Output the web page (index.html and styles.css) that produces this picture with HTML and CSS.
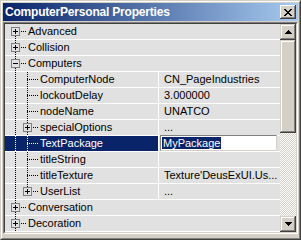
FILE: index.html
```html
<!DOCTYPE html>
<html>
<head>
<meta charset="utf-8">
<link rel="stylesheet" href="styles.css">
</head>
<body>
<div class="window">
  <div class="frame">
    <div class="title">
      <span class="caption">ComputerPersonal Properties</span>
      <span class="close"><svg width="8" height="7" viewBox="0 0 8 7"><path d="M0 0h2v1h1v1h2V1h1V0h2v1H7v1H6v1H5v1h1v1h1v1h1v1H6V6H5V5H3v1H2v1H0V6h1V5h1V4h1V3H2V2H1V1H0z" fill="#000"/></svg></span>
    </div>
    <div class="list">
      <div class="well">
        <div class="rows">
          <div class="row cat"><div class="name"><span class="tc top"><span class="bx plus"></span></span><span class="stub"></span><span class="nm">Advanced</span></div></div>
          <div class="row cat"><div class="name"><span class="tc tee"><span class="bx plus"></span></span><span class="stub"></span><span class="nm">Collision</span></div></div>
          <div class="row cat"><div class="name"><span class="tc tee"><span class="bx minus"></span></span><span class="stub"></span><span class="nm">Computers</span></div></div>
          <div class="row"><div class="name"><span class="tc pipe"></span><span class="tc tee"></span><span class="stub"></span><span class="nm">ComputerNode</span></div><div class="val">CN_PageIndustries</div></div>
          <div class="row"><div class="name"><span class="tc pipe"></span><span class="tc tee"></span><span class="stub"></span><span class="nm">lockoutDelay</span></div><div class="val">3.000000</div></div>
          <div class="row"><div class="name"><span class="tc pipe"></span><span class="tc tee"></span><span class="stub"></span><span class="nm">nodeName</span></div><div class="val">UNATCO</div></div>
          <div class="row"><div class="name"><span class="tc pipe"></span><span class="tc tee"><span class="bx plus"></span></span><span class="stub"></span><span class="nm">specialOptions</span></div><div class="val">...</div></div>
          <div class="row sel"><div class="name"><span class="tc pipe"></span><span class="tc tee"></span><span class="stub"></span><span class="nm">TextPackage</span></div><div class="val editing"><div class="edit"><span class="hl">MyPackage</span></div></div></div>
          <div class="row"><div class="name"><span class="tc pipe"></span><span class="tc tee"></span><span class="stub"></span><span class="nm">titleString</span></div><div class="val"></div></div>
          <div class="row"><div class="name"><span class="tc pipe"></span><span class="tc tee"></span><span class="stub"></span><span class="nm">titleTexture</span></div><div class="val">Texture'DeusExUI.Us...</div></div>
          <div class="row"><div class="name"><span class="tc pipe"></span><span class="tc end"><span class="bx plus"></span></span><span class="stub"></span><span class="nm">UserList</span></div><div class="val">...</div></div>
          <div class="row cat"><div class="name"><span class="tc tee"><span class="bx plus"></span></span><span class="stub"></span><span class="nm">Conversation</span></div></div>
          <div class="row cat"><div class="name"><span class="tc tee"><span class="bx plus"></span></span><span class="stub"></span><span class="nm">Decoration</span></div></div>
        </div>
        <div class="sb">
          <div class="btn"><svg width="7" height="4" viewBox="0 0 7 4"><path d="M3 0h1v1h1v1h1v1h1v1H0V3h1V2h1V1h1z" fill="#000"/></svg></div>
          <div class="thumb"></div>
          <div class="track"></div>
          <div class="btn"><svg width="7" height="4" viewBox="0 0 7 4"><path d="M0 0h7v1H6v1H5v1H4v1H3V3H2V2H1V1H0z" fill="#000"/></svg></div>
        </div>
      </div>
    </div>
  </div>
</div>
</body>
</html>
```

FILE: styles.css
```css
* { box-sizing: border-box; }
html, body { margin: 0; padding: 0; }
body {
  width: 301px; height: 240px; overflow: hidden;
  font-family: "Liberation Sans", Arial, sans-serif;
  font-size: 11px; color: #000; background: #d4d0c8;
}
.window {
  width: 301px; height: 240px;
  border: 1px solid; border-color: #d4d0c8 #404040 #404040 #d4d0c8;
  background: #d4d0c8;
}
.frame {
  height: 100%;
  border: 1px solid; border-color: #fff #808080 #808080 #fff;
  padding: 1px;
  display: flex; flex-direction: column;
}
.title {
  flex: none; height: 18px;
  display: flex; align-items: center; justify-content: space-between;
  padding: 0 2px;
  background: linear-gradient(to right, #0a246a, #a6caf0);
  color: #fff; font-weight: bold; font-size: 12px; letter-spacing: -0.2px;
  line-height: 18px;
}
.caption { white-space: nowrap; }
.close {
  width: 16px; height: 14px; background: #d4d0c8;
  display: flex; align-items: center; justify-content: center;
  box-shadow: inset -1px -1px #404040, inset 1px 1px #fff, inset -2px -2px #808080;
}
.close svg, .btn svg { display: block; }
.list {
  flex: none; margin-top: 1px; height: 212px;
  border: 1px solid; border-color: #808080 #fff #fff #808080;
}
.well {
  height: 100%; display: flex;
  border: 1px solid; border-color: #404040 #d4d0c8 #d4d0c8 #404040;
}
.rows { flex: 1; background: #e1e1e1; --d: #000; }
.row {
  display: flex; height: 16px;
  box-shadow: inset 0 -1px #fff;
}
.name {
  width: 153px; flex: none; display: flex; padding-left: 4px;
  white-space: nowrap;
}
.row.cat .name { width: auto; flex: 1; }
.nm { line-height: 15px; margin-left: 2px; }
.val {
  flex: 1; border-left: 1px solid #fff; padding-left: 5px;
  line-height: 15px; white-space: nowrap; overflow: hidden;
}
.tc { width: 12px; height: 16px; flex: none; padding: 3px 0 0 2px; }
.tc.pipe {
  background: repeating-linear-gradient(to bottom, var(--d) 0 1px, transparent 1px 2px) 6px 0 / 1px 16px no-repeat;
}
.tc.tee {
  background:
    repeating-linear-gradient(to bottom, var(--d) 0 1px, transparent 1px 2px) 6px 0 / 1px 16px no-repeat,
    repeating-linear-gradient(to right, var(--d) 0 1px, transparent 1px 2px) 6px 7px / 6px 1px no-repeat;
}
.tc.top {
  background:
    repeating-linear-gradient(to bottom, var(--d) 0 1px, transparent 1px 2px) 6px 8px / 1px 8px no-repeat,
    repeating-linear-gradient(to right, var(--d) 0 1px, transparent 1px 2px) 6px 7px / 6px 1px no-repeat;
}
.tc.end {
  background:
    repeating-linear-gradient(to bottom, var(--d) 0 1px, transparent 1px 2px) 6px 0 / 1px 8px no-repeat,
    repeating-linear-gradient(to right, var(--d) 0 1px, transparent 1px 2px) 6px 7px / 6px 1px no-repeat;
}
.stub {
  width: 5px; height: 16px; flex: none;
  background: repeating-linear-gradient(to right, var(--d) 0 1px, transparent 1px 2px) 0 7px / 5px 1px no-repeat;
}
.bx {
  display: block; width: 9px; height: 9px;
  border: 1px solid #808080; background-color: #e1e1e1;
}
.bx.plus {
  background:
    linear-gradient(#000, #000) 1px 3px / 5px 1px no-repeat,
    linear-gradient(#000, #000) 3px 1px / 1px 5px no-repeat,
    #e1e1e1;
}
.bx.minus {
  background: linear-gradient(#000, #000) 1px 3px / 5px 1px no-repeat, #e1e1e1;
}
.row.sel { --d: #fff; }
.row.sel .name {
  background: linear-gradient(#0a246a, #0a246a) 0 0 / 100% 15px no-repeat;
  color: #fff;
}
.val.editing { padding-left: 1px; overflow: visible; }
.edit {
  width: 117px; height: 16px; margin-top: -1px;
  background: #fff;
  border: 1px solid; border-color: #808080 #d4d0c8 #d4d0c8 #808080;
  padding: 1px 0 0 1px; line-height: 13px;
}
.hl { background: #0a246a; color: #fff; padding: 0 1px; }
.sb { width: 16px; flex: none; display: flex; flex-direction: column; }
.btn, .thumb {
  background: #d4d0c8;
  box-shadow: inset -1px -1px #404040, inset 1px 1px #d4d0c8, inset -2px -2px #808080, inset 2px 2px #fff;
}
.btn { height: 16px; flex: none; display: flex; align-items: center; justify-content: center; }
.thumb { height: 93px; flex: none; }
.track {
  flex: 1;
  background:
    linear-gradient(45deg, transparent 0, transparent 100%),
    conic-gradient(#fff 0 25%, #d4d0c8 0 50%, #fff 0 75%, #d4d0c8 0) 0 0 / 2px 2px;
}
```
